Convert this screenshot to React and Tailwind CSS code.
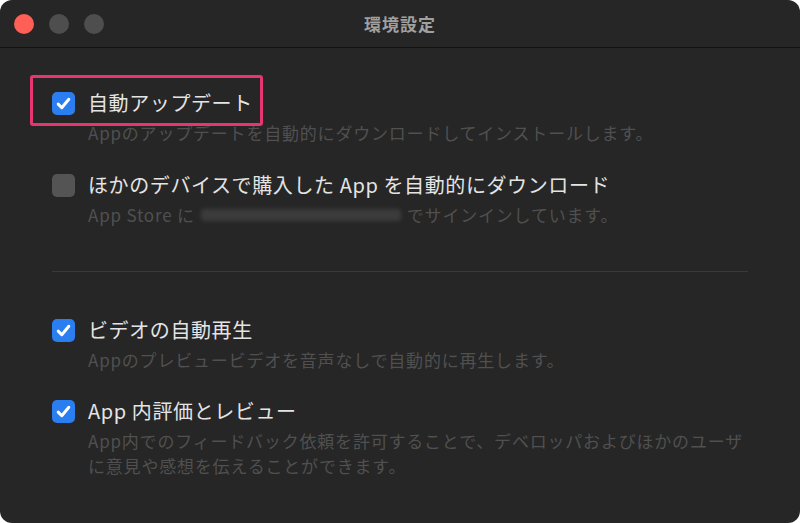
import React from "react";

const font = { fontFamily: '"Noto Sans CJK JP", "Noto Sans", sans-serif' };

function Check({ checked }) {
  if (!checked) {
    return <div className="w-[23px] h-[23px] rounded-[5px] bg-[#545454] shrink-0" />;
  }
  return (
    <div className="w-[23px] h-[23px] rounded-[5px] bg-[#2a7ef0] shrink-0 flex items-center justify-center">
      <svg width="17" height="17" viewBox="0 0 16 16" fill="none">
        <path d="M3 8.6 L6.4 12 L13 4" stroke="white" strokeWidth="2.8" strokeLinecap="round" strokeLinejoin="round" />
      </svg>
    </div>
  );
}

function Row({ checked, label, children, highlight, className = "" }) {
  return (
    <div className={"relative flex flex-col " + className}>
      {highlight && (
        <div className="absolute left-[-22px] top-[-14px] w-[233px] h-[51px] border-[3px] border-[#e6366f] rounded-[3px]" />
      )}
      <div className="flex items-center gap-[13px] h-[28px]">
        <Check checked={checked} />
        <span className="text-[20px] leading-[28px] tracking-[0.6px] text-[#e4e4e4]">{label}</span>
      </div>
      <div className="pl-[36px] mt-[3px] text-[17px] leading-[25px] tracking-[0.8px] text-[#505050]">{children}</div>
    </div>
  );
}

export default function App() {
  return (
    <div className="w-[800px] h-[523px] bg-white" style={font}>
      <div className="w-[800px] h-[523px] rounded-[12px] overflow-hidden bg-[#262626] flex flex-col">
        <div className="h-[48px] shrink-0 relative flex items-center border-b border-[#121212]">
          <div className="flex items-center gap-[15px] pl-[14px]">
            <div className="w-[20px] h-[20px] rounded-full bg-[#fe5f57]" />
            <div className="w-[20px] h-[20px] rounded-full bg-[#4e4e4e]" />
            <div className="w-[20px] h-[20px] rounded-full bg-[#4e4e4e]" />
          </div>
          <div className="absolute inset-0 flex items-center justify-center text-[17px] font-bold text-[#a0a0a0] tracking-[1px]">
            環境設定
          </div>
        </div>
        <div className="flex flex-col pl-[52px] pr-[52px] pt-[41px]">
          <Row checked label="自動アップデート" highlight>
            Appのアップデートを自動的にダウンロードしてインストールします。
          </Row>
          <Row checked={false} label="ほかのデバイスで購入した App を自動的にダウンロード" className="mt-[26px]">
            <span className="flex items-center">
              App Store に
              <span className="inline-block w-[200px] h-[12px] mx-[6px] bg-[#3c3c3c] blur-[2px] rounded-[3px]" />
              でサインインしています。
            </span>
          </Row>
          <div className="h-[1px] bg-[#3a3a3a] mt-[44px]" />
          <Row checked label="ビデオの自動再生" className="mt-[44px]">
            Appのプレビュービデオを音声なしで自動的に再生します。
          </Row>
          <Row checked label="App 内評価とレビュー" className="mt-[25px]">
            App内でのフィードバック依頼を許可することで、デベロッパおよびほかのユーザ
            <br />
            に意見や感想を伝えることができます。
          </Row>
        </div>
      </div>
    </div>
  );
}
